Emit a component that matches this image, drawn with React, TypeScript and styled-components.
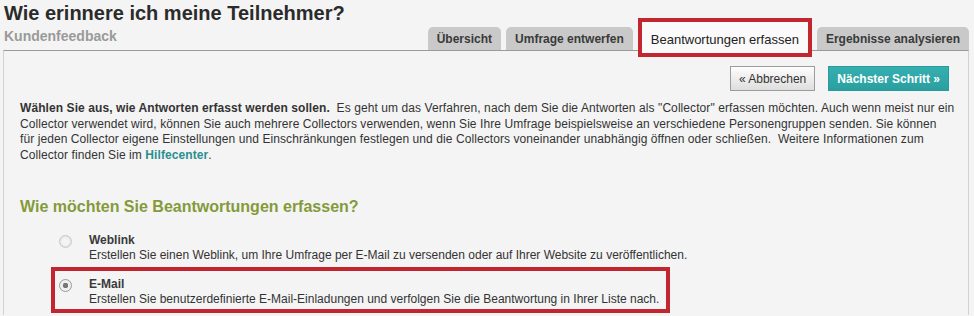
import React from 'react'
import styled, { createGlobalStyle } from 'styled-components'

const GlobalStyle = createGlobalStyle`
  html, body {
    margin: 0;
    padding: 0;
    background: #f4f4f4;
    font-family: "Liberation Sans", Arial, sans-serif;
    color: #333;
  }
`

const Page = styled.div`
  width: 966px;
  margin: 0 5px 0 3px;
`

const Header = styled.div`
  display: flex;
  justify-content: space-between;
  align-items: flex-end;
  height: 50px;
  padding-left: 1px;
`

const TitleBlock = styled.div`
  align-self: flex-start;
  padding-top: 2px;
`

const Title = styled.h1`
  margin: 0;
  font-size: 20px;
  line-height: 22px;
  font-weight: bold;
  color: #2b2b2b;
`

const Subtitle = styled.div`
  margin-top: 4px;
  font-size: 14px;
  line-height: 16px;
  font-weight: bold;
  color: #9a9a9a;
`

const Tabs = styled.div`
  display: flex;
  align-items: flex-end;
  gap: 5px;
`

const Tab = styled.div<{ $active?: boolean }>`
  position: relative;
  z-index: 1;
  box-sizing: border-box;
  height: ${p => (p.$active ? '39px' : '23px')};
  padding: ${p => (p.$active ? '3px 9px 0' : '0 9px')};
  margin-bottom: ${p => (p.$active ? '-7px' : '0')};
  display: flex;
  align-items: center;
  font-size: ${p => (p.$active ? '13px' : '12px')};
  font-weight: ${p => (p.$active ? 'normal' : 'bold')};
  color: ${p => (p.$active ? '#222' : '#3a3a3a')};
  background: ${p => (p.$active ? '#fafafa' : '#c9c9c9')};
  border: ${p => (p.$active ? '4px solid #c2262e' : 'none')};
  border-radius: ${p => (p.$active ? '0' : '5px 5px 0 0')};
  white-space: nowrap;
`

const Panel = styled.div`
  border-top: 1px solid #9a9a9a;
  border-left: 1px solid #d2d2d2;
  border-right: 1px solid #d2d2d2;
  padding: 15px 19px 0 16px;
  min-height: 265px;
  box-sizing: border-box;
`

const Actions = styled.div`
  display: flex;
  justify-content: flex-end;
  gap: 13px;
`

const Button = styled.button<{ $primary?: boolean }>`
  height: 25px;
  padding: 0 ${p => (p.$primary ? '8px' : '8px')};
  font-family: "Liberation Sans", Arial, sans-serif;
  font-size: 12px;
  font-weight: ${p => (p.$primary ? 'bold' : 'normal')};
  color: ${p => (p.$primary ? '#fff' : '#333')};
  background: ${p =>
    p.$primary
      ? 'linear-gradient(#35afb0, #2a9fa0)'
      : 'linear-gradient(#fdfdfd, #dedede)'};
  border: 1px solid ${p => (p.$primary ? '#2a9a9b' : '#9c9c9c')};
  border-radius: 0;
`

const Intro = styled.p`
  margin: 10px 0 0 0;
  font-size: 12px;
  line-height: 15.5px;
  letter-spacing: 0.08px;
  color: #333;
  white-space: nowrap;
`

const Link = styled.a`
  color: #2b8f90;
  font-weight: bold;
  text-decoration: none;
`

const Question = styled.h2`
  margin: 34px 0 6px 0;
  font-size: 16px;
  line-height: 20px;
  font-weight: bold;
  color: #849a3b;
`

const Options = styled.div`
  display: flex;
  flex-direction: column;
  align-items: flex-start;
  margin-left: 31px;
`

const Option = styled.label<{ $marked?: boolean }>`
  display: flex;
  align-items: flex-start;
  gap: 17px;
  box-sizing: border-box;
  height: ${p => (p.$marked ? '46px' : '44px')};
  padding: 6px 7px 0 4px;
  border: 4px solid ${p => (p.$marked ? '#c2262e' : 'transparent')};
`

const Radio = styled.span<{ $checked?: boolean }>`
  flex: none;
  width: 11px;
  height: 11px;
  margin-top: 2px;
  border-radius: 50%;
  border: 1px solid ${p => (p.$checked ? '#9a9a9a' : '#c8c8c8')};
  background: ${p =>
    p.$checked
      ? 'radial-gradient(circle, #777 0 2.5px, #eee 3px)'
      : 'radial-gradient(circle, #f4f4f4 0 3px, #e2e2e2 6px)'};
`

const OptionText = styled.div`
  font-size: 12px;
  line-height: 15px;
  color: #333;
  white-space: nowrap;
`

const OptionName = styled.div`
  font-weight: bold;
  color: #3a3a3a;
`

export default function App() {
  return (
    <>
      <GlobalStyle />
      <Page>
        <Header>
          <TitleBlock>
            <Title>Wie erinnere ich meine Teilnehmer?</Title>
            <Subtitle>Kundenfeedback</Subtitle>
          </TitleBlock>
          <Tabs>
            <Tab>Übersicht</Tab>
            <Tab>Umfrage entwerfen</Tab>
            <Tab $active>Beantwortungen erfassen</Tab>
            <Tab>Ergebnisse analysieren</Tab>
          </Tabs>
        </Header>
        <Panel>
          <Actions>
            <Button>« Abbrechen</Button>
            <Button $primary>Nächster Schritt »</Button>
          </Actions>
          <Intro>
            <b>Wählen Sie aus, wie Antworten erfasst werden sollen.</b>&nbsp; Es geht um das Verfahren, nach dem Sie die Antworten als "Collector" erfassen möchten. Auch wenn meist nur ein
            <br />
            Collector verwendet wird, können Sie auch mehrere Collectors verwenden, wenn Sie Ihre Umfrage beispielsweise an verschiedene Personengruppen senden. Sie können
            <br />
            für jeden Collector eigene Einstellungen und Einschränkungen festlegen und die Collectors voneinander unabhängig öffnen oder schließen.&nbsp; Weitere Informationen zum
            <br />
            Collector finden Sie im <Link href="#">Hilfecenter</Link>.
          </Intro>
          <Question>Wie möchten Sie Beantwortungen erfassen?</Question>
          <Options>
            <Option>
              <Radio />
              <OptionText>
                <OptionName>Weblink</OptionName>
                Erstellen Sie einen Weblink, um Ihre Umfrage per E-Mail zu versenden oder auf Ihrer Website zu veröffentlichen.
              </OptionText>
            </Option>
            <Option $marked>
              <Radio $checked />
              <OptionText>
                <OptionName>E-Mail</OptionName>
                Erstellen Sie benutzerdefinierte E-Mail-Einladungen und verfolgen Sie die Beantwortung in Ihrer Liste nach.
              </OptionText>
            </Option>
          </Options>
        </Panel>
      </Page>
    </>
  )
}
